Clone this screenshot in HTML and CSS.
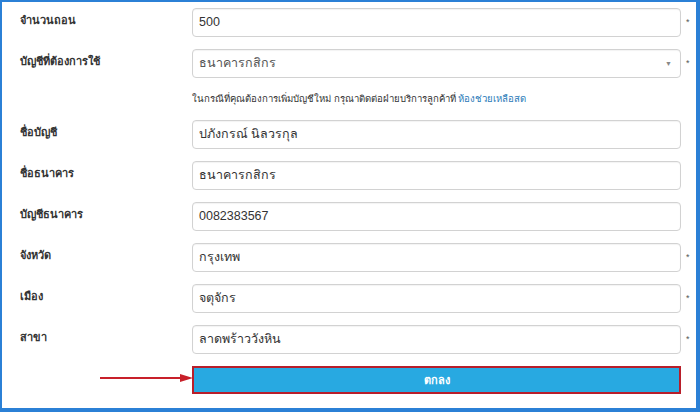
FILE: index.html
```html
<!DOCTYPE html>
<html lang="th">
<head>
<meta charset="utf-8">
<link rel="stylesheet" href="styles.css">
</head>
<body>
<div class="frame">
  <form class="form">
    <label class="label">จำนวนถอน</label>
    <div class="field">500</div>
    <span class="req">*</span>

    <label class="label">บัญชีที่ต้องการใช้</label>
    <div class="field select">ธนาคารกสิกร<span class="caret">▼</span></div>
    <span class="req">*</span>

    <span></span>
    <p class="help">ในกรณีที่คุณต้องการเพิ่มบัญชีใหม่ กรุณาติดต่อฝ่ายบริการลูกค้าที่ <a class="link">ห้องช่วยเหลือสด</a></p>
    <span></span>

    <label class="label">ชื่อบัญชี</label>
    <div class="field">ปภังกรณ์ นิลวรกุล</div>
    <span></span>

    <label class="label">ชื่อธนาคาร</label>
    <div class="field">ธนาคารกสิกร</div>
    <span></span>

    <label class="label">บัญชีธนาคาร</label>
    <div class="field">0082383567</div>
    <span></span>

    <label class="label">จังหวัด</label>
    <div class="field">กรุงเทพ</div>
    <span class="req">*</span>

    <label class="label">เมือง</label>
    <div class="field">จตุจักร</div>
    <span class="req">*</span>

    <label class="label">สาขา</label>
    <div class="field">ลาดพร้าววังหิน</div>
    <span class="req">*</span>

    <span class="arrow-cell">
      <svg class="arrow" width="94" height="10" viewBox="0 0 94 10">
        <line x1="0" y1="5" x2="82" y2="5" stroke="#c8202a" stroke-width="2"/>
        <polygon points="80,1 93,5 80,9" fill="#c8202a"/>
      </svg>
    </span>
    <button type="button" class="submit">ตกลง</button>
    <span></span>
  </form>
</div>
</body>
</html>
```
FILE: styles.css
```css
* { box-sizing: border-box; }
html, body { margin: 0; padding: 0; background: #fff; }
body {
  width: 700px;
  height: 412px;
  font-family: "Liberation Sans", "Noto Sans", sans-serif;
  color: #333;
}
.frame {
  width: 700px;
  height: 412px;
  border-style: solid;
  border-color: #2b80d6;
  border-width: 2px 4px 4px 2px;
  background: #fff;
}
.form {
  margin: 0;
  padding: 6px 0 0 18px;
  display: grid;
  grid-template-columns: 172px 489px 1fr;
  row-gap: 12px;
}
.label {
  font-size: 11px;
  font-weight: bold;
  line-height: 16px;
  padding-top: 4px;
  color: #333;
}
.field {
  height: 29px;
  border: 1px solid #d2d2d2;
  border-radius: 4px;
  padding: 0 8px 0 6px;
  font-size: 12.5px;
  line-height: 27px;
  color: #333;
  display: flex;
  align-items: center;
  box-shadow: inset 0 1px 1px rgba(0,0,0,0.05);
}
.select { justify-content: space-between; color: #555; }
.caret { font-size: 7px; color: #888; }
.req {
  font-size: 9px;
  color: #555;
  padding: 9px 0 0 5px;
}
.help {
  margin: 0;
  font-size: 9.6px;
  line-height: 18px;
  color: #333;
}
.link { color: #2a7ab8; }
.arrow-cell { position: relative; }
.arrow {
  position: absolute;
  left: 80px;
  top: 7px;
}
.submit {
  height: 28px;
  border: 2px solid #b81e2a;
  background: #28a9e1;
  color: #fff;
  font-family: inherit;
  font-size: 11px;
  font-weight: bold;
  padding: 0;
}
```
